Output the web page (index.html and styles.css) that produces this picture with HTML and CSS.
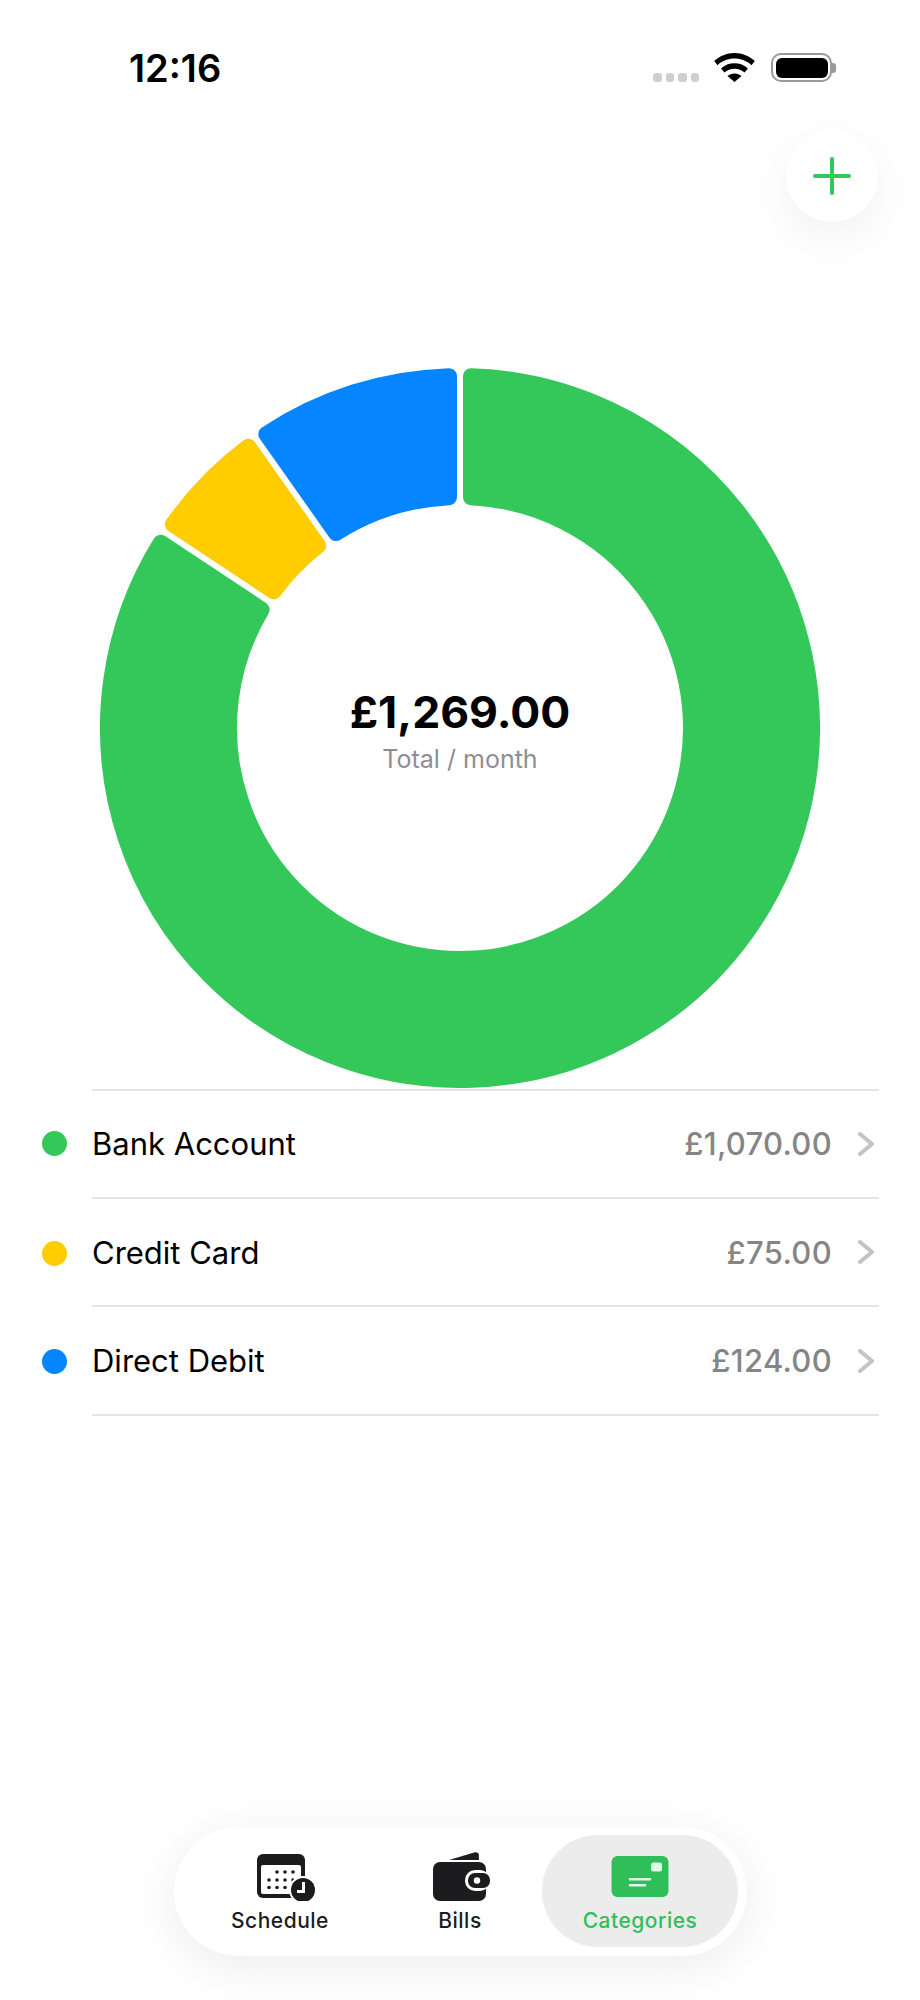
FILE: index.html
```html
<!DOCTYPE html>
<html lang="en">
<head>
    <meta charset="UTF-8">
    <meta name="viewport" content="width=device-width, initial-scale=1.0">
    <title>Categories</title>
    <link rel="stylesheet" href="styles.css">
</head>
<body>

    <div class="screen">

        <!-- Status bar -->
        <div class="status-bar">
            <span class="clock">12:16</span>
            <div class="status-icons">
                <div class="signal"><i></i><i></i><i></i><i></i></div>
                <svg class="wifi" viewBox="0 0 41 29" width="41" height="29">
                    <path d="M20.5 0C12.6 0 5.6 3 .2 8l3.3 4.2C8 8 14 5.6 20.5 5.6S33 8 37.5 12.2L40.8 8C35.4 3 28.4 0 20.5 0z"/>
                    <path d="M20.5 10.2c-5.2 0-9.8 1.9-13.4 5.2l3.3 4.2c2.7-2.4 6.2-3.9 10.1-3.9s7.4 1.5 10.1 3.9l3.3-4.2c-3.6-3.3-8.2-5.2-13.4-5.2z"/>
                    <path d="M20.5 20.4c-2.7 0-5.1 1-7 2.6l7 6 7-6c-1.9-1.6-4.3-2.6-7-2.6z"/>
                </svg>
                <div class="battery">
                    <div class="battery-body"><div class="battery-level"></div></div>
                    <div class="battery-nub"></div>
                </div>
            </div>
        </div>

        <div class="top-actions">
            <button class="add-btn" aria-label="Add">
                <svg viewBox="0 0 38 38" width="38" height="38">
                    <path d="M19 2v34M2 19h34" fill="none" stroke="#34C759" stroke-width="4" stroke-linecap="round"/>
                </svg>
            </button>
        </div>

        <!-- Donut chart -->
        <div class="chart">
            <svg class="donut" viewBox="-360 -360 720 720" width="720" height="720">
                <path class="seg seg-green" d="M11 -351.83A352 352 0 1 1 -299.29 -185.29L-198.38 -118.36A231 231 0 1 0 11 -230.74Z"/>
                <path class="seg seg-yellow" d="M-287.13 -203.63A352 352 0 0 1 -211.64 -281.25L-141.9 -182.27A231 231 0 0 0 -186.22 -136.7Z"/>
                <path class="seg seg-blue" d="M-193.66 -293.93A352 352 0 0 1 -11 -351.83L-11 -230.74A231 231 0 0 0 -123.92 -194.95Z"/>
            </svg>
            <div class="chart-label">
                <div class="total">£1,269.00</div>
                <div class="total-caption">Total / month</div>
            </div>
        </div>

        <!-- Category list -->
        <ul class="categories">
            <li class="category">
                <span class="dot dot-green"></span>
                <div class="category-body">
                    <span class="category-name">Bank Account</span>
                    <span class="category-amount">£1,070.00</span>
                    <svg class="chevron" viewBox="0 0 16 24" width="16" height="24"><path d="M2 2l12 10L2 22"/></svg>
                </div>
            </li>
            <li class="category">
                <span class="dot dot-yellow"></span>
                <div class="category-body">
                    <span class="category-name">Credit Card</span>
                    <span class="category-amount">£75.00</span>
                    <svg class="chevron" viewBox="0 0 16 24" width="16" height="24"><path d="M2 2l12 10L2 22"/></svg>
                </div>
            </li>
            <li class="category">
                <span class="dot dot-blue"></span>
                <div class="category-body">
                    <span class="category-name">Direct Debit</span>
                    <span class="category-amount">£124.00</span>
                    <svg class="chevron" viewBox="0 0 16 24" width="16" height="24"><path d="M2 2l12 10L2 22"/></svg>
                </div>
            </li>
        </ul>

        <!-- Tab bar -->
        <nav class="tabs">
            <a class="tab">
                <svg class="tab-icon tab-icon-schedule" viewBox="0 0 58 49" width="58" height="49">
                    <rect x="0" y="2" width="48" height="44" rx="6" fill="#1c1c1e"/>
                    <path d="M6 13h36a2 2 0 0 1 2 2v25a2 2 0 0 1-2 2H6a2 2 0 0 1-2-2V15a2 2 0 0 1 2-2z" fill="#fff"/>
                    <g fill="#1c1c1e">
                        <circle cx="20" cy="20" r="1.8"/><circle cx="28" cy="20" r="1.8"/><circle cx="36" cy="20" r="1.8"/>
                        <circle cx="12" cy="28" r="1.8"/><circle cx="20" cy="28" r="1.8"/><circle cx="28" cy="28" r="1.8"/><circle cx="36" cy="28" r="1.8"/>
                        <circle cx="12" cy="35.5" r="1.8"/><circle cx="20" cy="35.5" r="1.8"/><circle cx="28" cy="35.5" r="1.8"/>
                    </g>
                    <circle cx="46" cy="38" r="14" fill="#fff"/>
                    <circle cx="46" cy="38" r="12" fill="#1c1c1e"/>
                    <path d="M46.5 30v9.5H40" fill="none" stroke="#fff" stroke-width="3"/>
                </svg>
                <span>Schedule</span>
            </a>
            <a class="tab">
                <svg class="tab-icon tab-icon-bills" viewBox="0 0 58 49" width="58" height="49">
                    <path fill="#1c1c1e" d="M17 8L43 .3c2-.5 3.5.5 3.8 2.2L47 8z"/>
                    <rect x="1" y="10" width="53" height="39" rx="7" fill="#1c1c1e"/>
                    <rect x="33" y="18" width="25" height="21" rx="10" fill="#fff"/>
                    <rect x="36" y="21" width="22" height="15" rx="7" fill="#1c1c1e"/>
                    <circle cx="45" cy="28.5" r="3.2" fill="#fff"/>
                </svg>
                <span>Bills</span>
            </a>
            <a class="tab tab-active">
                <svg class="tab-icon" viewBox="0 0 58 49" width="58" height="49">
                    <rect x="0.5" y="4" width="57" height="41" rx="6" fill="#30BE58"/>
                    <rect x="40" y="10.5" width="11" height="9" rx="2.5" fill="#e4f6ea"/>
                    <path d="M19 27.3h20M19 33.3h15" fill="none" stroke="#e4f6ea" stroke-width="2.6" stroke-linecap="round"/>
                </svg>
                <span>Categories</span>
            </a>
        </nav>

    </div>

</body>
</html>
```

FILE: styles.css
```css
* { margin: 0; padding: 0; box-sizing: border-box; }
body { background: #fff; font-family: "Inter", "Liberation Sans", sans-serif; color: #000; }

.screen { display: flex; flex-direction: column; width: 920px; height: 2000px; overflow: hidden; }

/* Status bar */
.status-bar { display: flex; justify-content: space-between; align-items: center; height: 29px; margin-top: 53px; padding: 0 84px 0 129px; }
.clock { font-size: 38px; font-weight: 600; line-height: 29px; margin-top: 2px; }
.status-icons { display: flex; align-items: center; }
.signal { display: flex; gap: 4px; margin-top: 20px; margin-right: 15px; }
.signal i { display: block; width: 8.5px; height: 9px; border-radius: 3px; background: #cfcfcf; }
.wifi { display: block; margin-right: 16px; }
.battery { display: flex; align-items: center; }
.battery-body { width: 61px; height: 29px; padding: 2.5px; border: 2.5px solid #9a9a9a; border-radius: 10px; }
.battery-level { width: 100%; height: 100%; border-radius: 6px; background: #000; }
.battery-nub { width: 4px; height: 10px; border-radius: 0 3px 3px 0; background: #9a9a9a; }

/* Add button */
.top-actions { display: flex; justify-content: flex-end; padding-right: 42px; margin-top: 48px; }
.add-btn { display: flex; align-items: center; justify-content: center; width: 92px; height: 92px; border: none; border-radius: 50%; background: #fff; box-shadow: 0 16px 50px rgba(0, 0, 0, 0.06); }

/* Chart */
.chart { display: grid; justify-items: center; align-items: center; margin-top: 146px; }
.donut, .chart-label { grid-area: 1 / 1; }
.donut { display: block; overflow: visible; }
.seg { stroke-width: 16; stroke-linejoin: round; }
.seg-green { fill: #34C759; stroke: #34C759; }
.seg-yellow { fill: #FFCC00; stroke: #FFCC00; }
.seg-blue { fill: #0585FF; stroke: #0585FF; }
.chart-label { text-align: center; padding-top: 3px; }
.total { font-size: 44.5px; font-weight: 700; line-height: 54px; }
.total-caption { font-size: 25px; line-height: 32px; color: #8e8e93; margin-top: 4px; }

/* List */
.categories { list-style: none; margin-top: 1px; padding-left: 42px; padding-right: 41px; }
.category { display: flex; align-items: center; }
.dot { flex: none; width: 25px; height: 25px; border-radius: 50%; margin-right: 25px; }
.dot-green { background: #34C759; }
.dot-yellow { background: #FFCC00; }
.dot-blue { background: #0585FF; }
.category-body { flex: 1; display: flex; align-items: center; height: 108.5px; border-bottom: 2px solid #e5e5e5; }
.category:first-child .category-body { border-top: 2px solid #e5e5e5; height: 109.8px; }
.category-name { flex: 1; font-size: 31px; }
.category-amount { font-size: 31px; font-weight: 500; letter-spacing: 0.3px; color: #858585; }
.chevron { margin-left: 26px; margin-right: 5px; }
.chevron path { fill: none; stroke: #c4c4c4; stroke-width: 4; stroke-linecap: round; stroke-linejoin: round; }

/* Tabs */
.tabs { display: flex; align-items: stretch; align-self: center; width: 573px; height: 129px; margin-top: auto; margin-bottom: 44px; margin-left: 1px; padding: 8px 9px 9px 16px; border-radius: 65px; background: #fff; box-shadow: 0 10px 50px rgba(0, 0, 0, 0.08); }
.tab { flex: 0 0 180px; display: flex; flex-direction: column; align-items: center; padding-top: 17px; border-radius: 56px; font-size: 21px; font-weight: 450; letter-spacing: 0.5px; color: #1c1c1e; }
.tab span { line-height: 26px; margin-top: 7px; }
.tab-icon { display: block; }
.tab-icon-schedule { margin-left: 12px; }
.tab-icon-bills { margin-left: 2px; }
.tab-active { flex: 0 0 196px; margin-left: -8px; background: #ececec; color: #30BE58; font-weight: 550; }
```
